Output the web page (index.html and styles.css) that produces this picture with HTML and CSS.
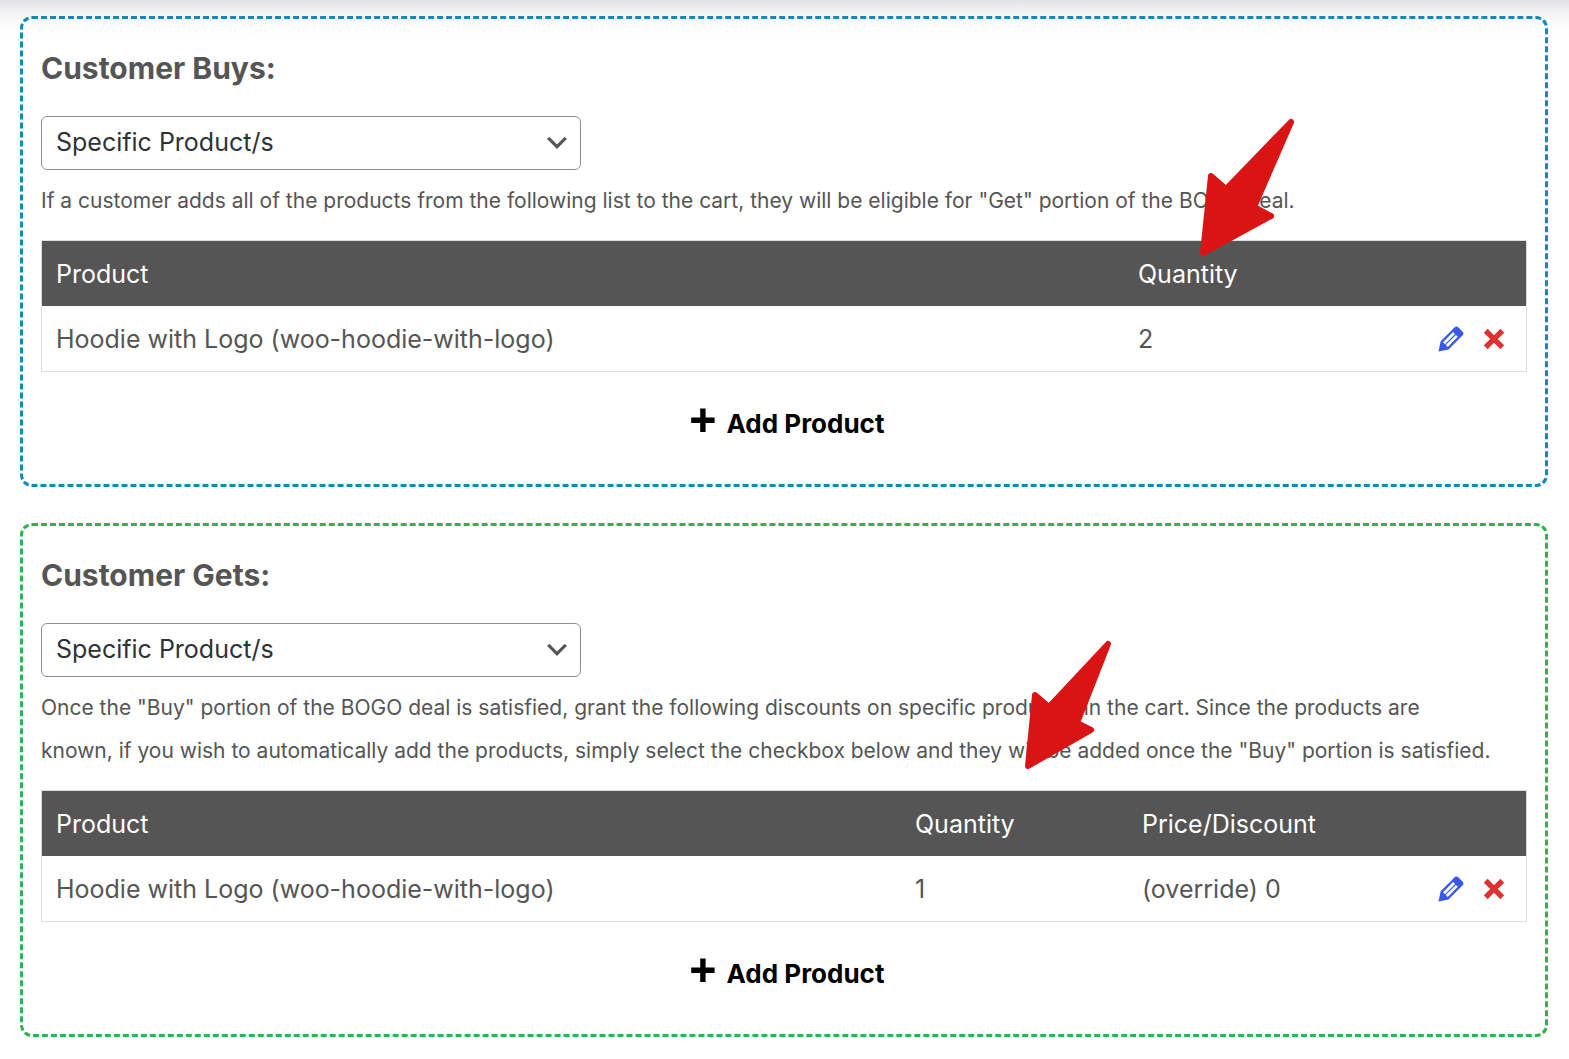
FILE: index.html
```html
<!DOCTYPE html>
<html lang="en">
<head>
<meta charset="utf-8">
<meta name="viewport" content="width=device-width, initial-scale=1">
<title>BOGO Deals</title>
<link rel="stylesheet" href="styles.css">
</head>
<body>
<svg class="sprite" aria-hidden="true">
  <symbol id="edit" viewBox="0 0 20 20"><path d="M13.89 3.39l2.71 2.72c.46.46.42 1.24.03 1.64l-8.01 8.02-5.56 1.16 1.16-5.58s7.6-7.63 7.99-8.03c.39-.39 1.22-.39 1.68.07zm-2.73 2.79l-5.59 5.61 1.11 1.11 5.54-5.65zm-2.97 8.23l5.58-5.6-1.07-1.08-5.59 5.6z"/></symbol>
  <symbol id="remove" viewBox="0 0 20 20"><path d="M12.12 10l3.53 3.53-2.12 2.12L10 12.12l-3.54 3.54-2.12-2.12L7.88 10 4.34 6.46l2.12-2.12L10 7.88l3.54-3.53 2.12 2.12z"/></symbol>
  <symbol id="plus" viewBox="0 0 20 20"><path d="M17 7v3h-5v5H9v-5H4V7h5V2h3v5h5z"/></symbol>
  <symbol id="chevron" viewBox="0 0 20 20"><path d="M4.700 5.700l5.300 5.300 5.300-5.300 1.900 1.300-7.200 7.200-7.200-7.200 1.900-1.300z"/></symbol>
</svg>
<main class="deals">
  <section class="panel panel-buys">
    <h2 class="panel-title"><label for="buys-type">Customer Buys:</label></h2>
    <div class="select-box">
      <select class="select" id="buys-type"><option>Specific Product/s</option></select>
      <svg class="select-arrow" aria-hidden="true"><use href="#chevron"/></svg>
    </div>
    <p class="description">If a customer adds all of the products from the following list to the cart, they will be eligible for "Get" portion of the BOGO deal.</p>
    <table class="products">
      <colgroup><col><col class="col-buy-quantity"><col class="col-actions"></colgroup>
      <thead><tr><th>Product</th><th>Quantity</th><th></th></tr></thead>
      <tbody><tr>
        <td>Hoodie with Logo (woo-hoodie-with-logo)</td><td>2</td>
        <td><div class="actions">
          <button class="icon-button edit" type="button" aria-label="Edit"><svg class="icon"><use href="#edit"/></svg></button>
          <button class="icon-button remove" type="button" aria-label="Remove"><svg class="icon"><use href="#remove"/></svg></button>
        </div></td>
      </tr></tbody>
    </table>
    <button class="add-product" type="button"><svg class="icon" aria-hidden="true"><use href="#plus"/></svg><span>Add Product</span></button>
    <svg class="pointer pointer-buys" viewBox="0 0 100 144" aria-hidden="true"><path d="M95 8L58 93L75 102L7 139L15 62L30 75Z"/></svg>
  </section>
  <section class="panel panel-gets">
    <h2 class="panel-title"><label for="gets-type">Customer Gets:</label></h2>
    <div class="select-box">
      <select class="select" id="gets-type"><option>Specific Product/s</option></select>
      <svg class="select-arrow" aria-hidden="true"><use href="#chevron"/></svg>
    </div>
    <p class="description">Once the "Buy" portion of the BOGO deal is satisfied, grant the following discounts on specific product/s in the cart. Since the products are<br> known, if you wish to automatically add the products, simply select the checkbox below and they will be added once the "Buy" portion is satisfied.</p>
    <table class="products">
      <colgroup><col><col class="col-get-quantity"><col class="col-price"><col class="col-actions"></colgroup>
      <thead><tr><th>Product</th><th>Quantity</th><th>Price/Discount</th><th></th></tr></thead>
      <tbody><tr>
        <td>Hoodie with Logo (woo-hoodie-with-logo)</td><td>1</td><td>(override) 0</td>
        <td><div class="actions">
          <button class="icon-button edit" type="button" aria-label="Edit"><svg class="icon"><use href="#edit"/></svg></button>
          <button class="icon-button remove" type="button" aria-label="Remove"><svg class="icon"><use href="#remove"/></svg></button>
        </div></td>
      </tr></tbody>
    </table>
    <button class="add-product" type="button"><svg class="icon" aria-hidden="true"><use href="#plus"/></svg><span>Add Product</span></button>
    <svg class="pointer pointer-gets" viewBox="0 0 92 134" aria-hidden="true"><path d="M87 7L56 86L70 93L7 129L14 58L28 70Z"/></svg>
  </section>
</main>
</body>
</html>
```
FILE: styles.css
```css
* {
  box-sizing: border-box;
}

body {
  margin: 0;
  background: #fff linear-gradient(#e2e3e6, #f3f3f4 12px, #fbfbfb 24px, #fff 38px) no-repeat;
  color: #555;
  font-family: Inter, "Liberation Sans", sans-serif;
  font-size: 25px;
}

.sprite {
  position: absolute;
  width: 0;
  height: 0;
}

.deals {
  display: flex;
  flex-direction: column;
  gap: 36px;
  padding: 16px 21px 22px 20px;
}

.panel {
  position: relative;
  padding: 0 18px 43px;
  border: 3px dashed;
  border-radius: 12px;
}

.panel-buys {
  border-color: #118ab8;
}

.panel-gets {
  border-color: #2fb350;
}

.panel-title {
  margin: 0;
  padding: 29px 0 28px;
  font-size: 30px;
  font-weight: 700;
  line-height: 40px;
}

.select-box {
  display: grid;
  align-items: center;
  width: 540px;
  max-width: 100%;
}

.select {
  grid-area: 1 / 1;
  appearance: none;
  width: 100%;
  height: 54px;
  padding: 0 48px 2px 14px;
  border: 1px solid #8c8f94;
  border-radius: 6px;
  background: #fff;
  color: #2c3338;
  font: inherit;
}

.select-arrow {
  grid-area: 1 / 1;
  justify-self: end;
  width: 28px;
  height: 28px;
  margin-right: 10px;
  fill: #555;
  pointer-events: none;
}

.description {
  margin: 9px 0 18px;
  font-size: 21px;
  line-height: 43px;
}

.products {
  width: 100%;
  table-layout: fixed;
  border: 1px solid #ddd;
  border-spacing: 0;
}

.products th,
.products td {
  height: 65px;
  padding: 0 14px;
  font-weight: 400;
  text-align: left;
}

.products th {
  background: #555;
  color: #fff;
}

.col-buy-quantity {
  width: 282px;
}

.col-get-quantity {
  width: 227px;
}

.col-price {
  width: 278px;
}

.col-actions {
  width: 120px;
}

.actions {
  display: flex;
  justify-content: flex-end;
  gap: 7px;
}

.icon-button,
.add-product {
  padding: 0;
  border: 0;
  background: none;
  font: inherit;
}

.icon {
  display: block;
  width: 36px;
  height: 36px;
  fill: currentColor;
}

.edit {
  color: #3858e9;
}

.remove {
  color: #dc3232;
}

.add-product {
  display: flex;
  align-items: center;
  gap: 7px;
  margin: 33px auto 0;
  color: #000;
  font-size: 26px;
  font-weight: 700;
}

.pointer {
  position: absolute;
  fill: #da1414;
  stroke: #da1414;
  stroke-width: 6px;
  stroke-linejoin: round;
}

.pointer-buys {
  top: 95px;
  right: 249px;
  width: 100px;
  height: 144px;
}

.pointer-gets {
  top: 111px;
  right: 432px;
  width: 92px;
  height: 134px;
}
```
